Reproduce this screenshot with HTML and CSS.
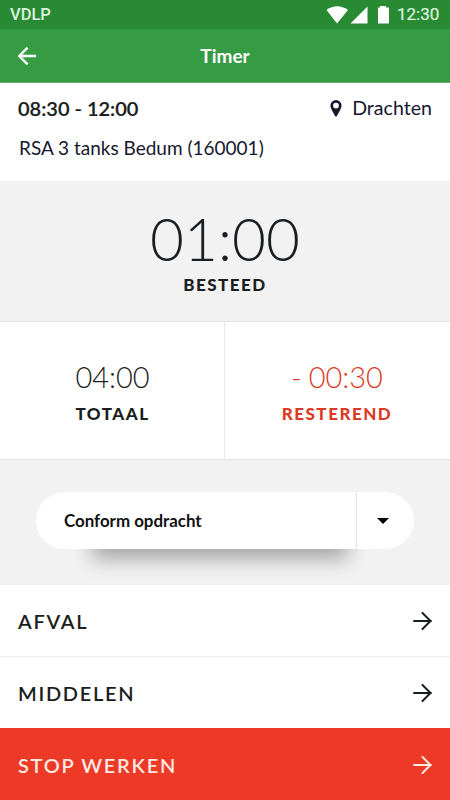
FILE: index.html
```html
<!DOCTYPE html>
<html lang="nl">
<head>
<meta charset="utf-8">
<title>Timer</title>
<link rel="stylesheet" href="styles.css">
</head>
<body>
<div class="status">
  <span class="carrier">VDLP</span>
  <svg class="signals" width="64" height="18" viewBox="0 0 64 18" fill="#fff">
    <path d="M.5 4Q11 -3.500 22 4L11 17.500Z"/>
    <path d="M41.500 .5V17.500H24.500Z"/>
    <path d="M54 0h6v1.500h3V17.500H52V1.500h2Z"/>
  </svg>
  <span class="clock">12:30</span>
</div>
<header class="bar">
  <svg class="back" width="20" height="20" viewBox="0 0 20 20" fill="none" stroke="#fff" stroke-width="2.400"><path d="M18 10H1.800M9.600 1.700L1.300 10l8.300 8.300"/></svg>
  <h1 class="title">Timer</h1>
</header>
<section class="job">
  <div class="job-top">
    <span class="hours">08:30 - 12:00</span>
    <span class="place"><svg width="12" height="17" viewBox="0 0 12 17"><path fill="#16182f" fill-rule="evenodd" d="M6 0a5.600 5.600 0 0 1 5.600 5.600C11.600 8.500 8 14 6.700 16.300Q6 17 5.300 16.300C4 14 .4 8.500 .4 5.600A5.600 5.600 0 0 1 6 0ZM6 2.700a2.900 2.900 0 1 0 0 5.800a2.900 2.900 0 0 0 0-5.800Z"/></svg><span class="city">Drachten</span></span>
  </div>
  <div class="job-name">RSA 3 tanks Bedum (160001)</div>
</section>
<section class="spent">
  <div class="big">01:00</div>
  <div class="label">BESTEED</div>
</section>
<section class="totals">
  <div class="total"><div class="num">04:00</div><div class="label">TOTAAL</div></div>
  <div class="total remaining"><div class="num">- 00:30</div><div class="label">RESTEREND</div></div>
</section>
<section class="choice">
  <div class="select">
    <span class="selected">Conform opdracht</span>
    <span class="toggle"><svg width="12" height="6" viewBox="0 0 12 6"><path d="M0 0h12L6 6Z"/></svg></span>
  </div>
</section>
<nav class="menu">
  <div class="row"><span class="row-text">AFVAL</span><svg class="arrow" width="20" height="18" viewBox="0 0 20 18"><path d="M1 9H18M9.500 1L17.500 9l-8 8"/></svg></div>
  <div class="row"><span class="row-text">MIDDELEN</span><svg class="arrow" width="20" height="18" viewBox="0 0 20 18"><path d="M1 9H18M9.500 1L17.500 9l-8 8"/></svg></div>
  <div class="row stop"><span class="row-text">STOP WERKEN</span><svg class="arrow" width="20" height="18" viewBox="0 0 20 18"><path d="M1 9H18M9.500 1L17.500 9l-8 8"/></svg></div>
</nav>
</body>
</html>
```
FILE: styles.css
```css
* { box-sizing: border-box; }
body { margin: 0; width: 450px; height: 800px; overflow: hidden; background: #fff; color: #1b1e20; font-family: Lato, "Liberation Sans", sans-serif; }
.status { height: 29px; display: flex; align-items: center; padding: 0 10px; background: #298a34; color: #dcf3de; font: 17px/29px Roboto, sans-serif; }
.carrier { flex: 1; font-size: 16.5px; font-weight: 500; }
.signals { margin-right: 7px; }
.clock { width: 43px; white-space: nowrap; font-size: 17px; -webkit-text-stroke: .2px; }
.bar { height: 54px; display: grid; grid-template-columns: 20px 1fr 20px; align-items: center; padding: 0 18px; background: #359c43; color: #fff; border-bottom: 1px solid #61ad69; }
.title { margin: 0; text-align: center; font-size: 19px; line-height: 24px; font-weight: 700; }
.job { height: 98px; padding: 13px 18px 0; }
.job-top { display: flex; justify-content: space-between; line-height: 24px; }
.hours { font-size: 20px; font-weight: 600; -webkit-text-stroke: .2px; }
.place { display: flex; align-items: center; gap: 10px; color: #16182f; }
.city { font-size: 19.6px; }
.job-name { margin: 16px 0 0 1px; font-size: 19px; line-height: 24px; color: #16182f; }
.spent { height: 140px; background: #f2f2f2; text-align: center; padding-top: 22px; }
.big { font-size: 58.5px; line-height: 70px; font-weight: 300; margin-bottom: 1px; }
.label { font-size: 17px; line-height: 22px; font-weight: 900; letter-spacing: 1.5px; }
.totals { height: 139px; display: grid; grid-template-columns: 1fr 1fr; border-top: 1px solid #e2e2e2; border-bottom: 1px solid #e2e2e2; text-align: center; }
.total { padding-top: 37px; }
.remaining { color: #dc3a26; border-left: 1px solid #e8e8e8; margin-left: -1px; padding-right: 1px; }
.num { font-size: 29px; line-height: 36px; font-weight: 300; margin-bottom: 8px; }
.remaining .num { word-spacing: -1px; }
.choice { height: 125px; background: #f2f2f2; padding: 32px 36px 0; }
.select { position: relative; z-index: 0; height: 57px; display: flex; }
.select::before { content: ""; position: absolute; z-index: -2; left: 56px; right: 66px; top: 30px; bottom: -10px; background: #a5a5a5; filter: blur(10px); }
.select::after { content: ""; position: absolute; z-index: -1; inset: 0; background: #fff; border-radius: 29px; }
.selected { flex: 1; padding-left: 28px; font-size: 16.9px; line-height: 57px; font-weight: 700; color: #111; }
.toggle { width: 58px; display: flex; align-items: center; padding-left: 20px; border-left: 1px solid #e2e2e2; }
.row { height: 71px; display: flex; align-items: center; justify-content: space-between; padding: 0 17px 0 18px; }
.row + .row { height: 72px; border-top: 1px solid #eee; }
.row-text { font-size: 20px; font-weight: 600; letter-spacing: 1.7px; padding-top: 1px; }
.arrow { fill: none; stroke: #1b1e20; stroke-width: 2; stroke-linecap: round; }
.row.stop { background: #ed3a27; border-top-color: #ed3a27; color: #ffe9e3; }
.stop .arrow { stroke: #ffe9e3; }
```
